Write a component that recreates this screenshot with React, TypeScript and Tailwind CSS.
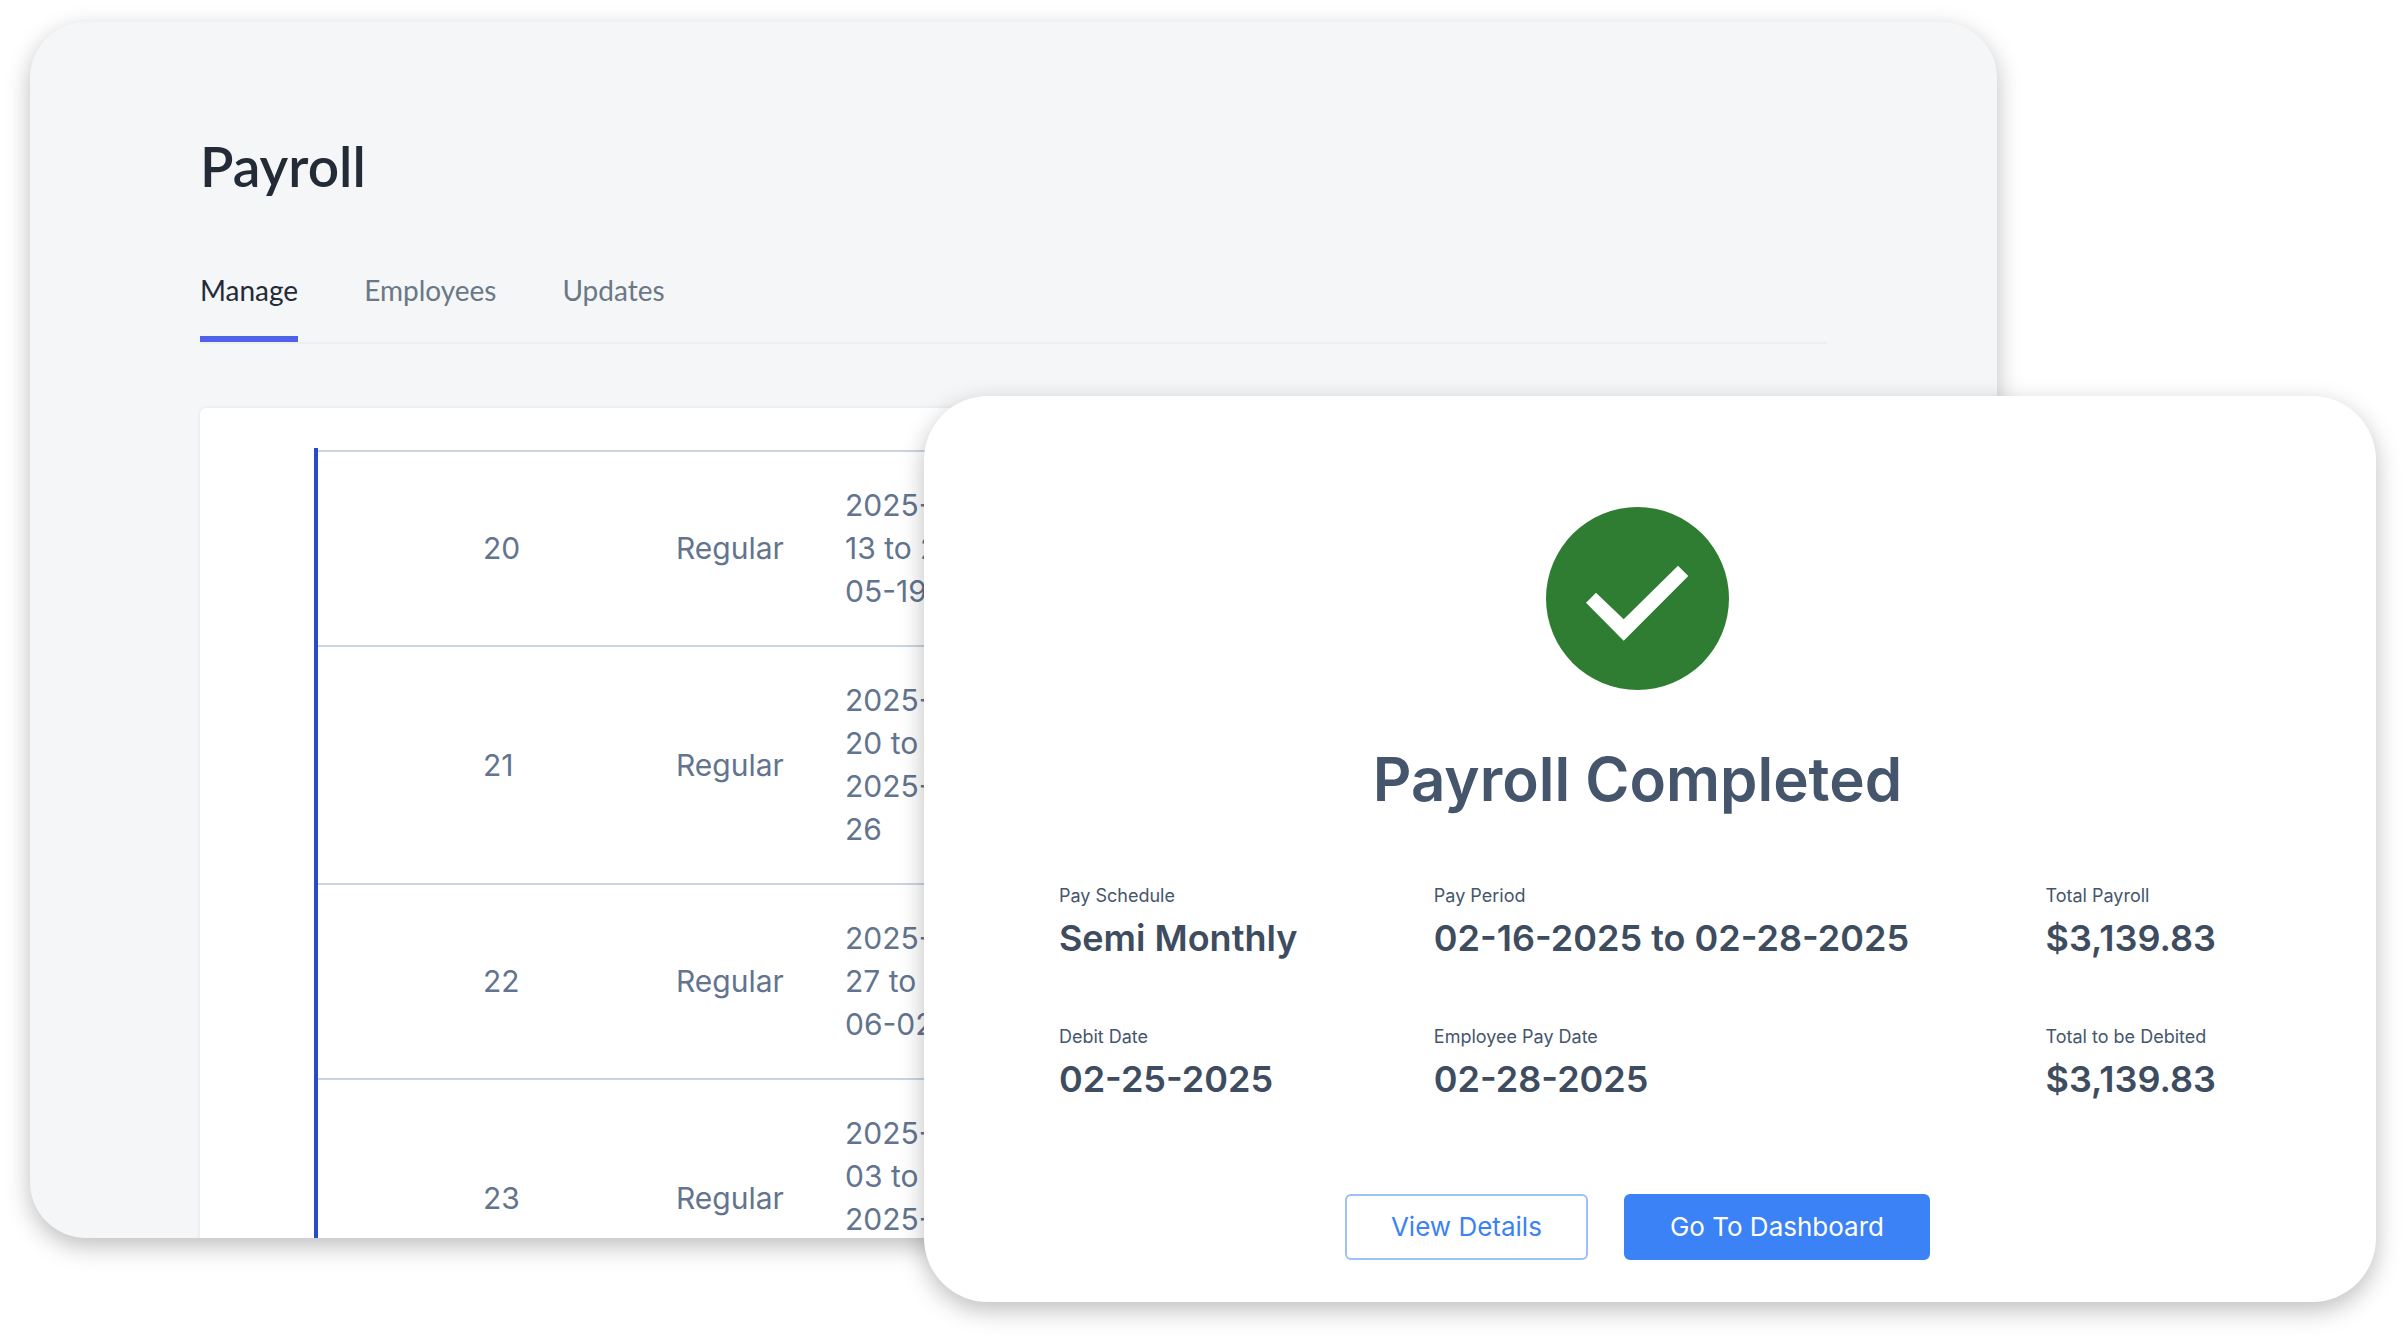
const tabs = ["Manage", "Employees", "Updates"];

const rows = [
  { no: "20", type: "Regular", period: "2025-05-\n13 to 2025-\n05-19" },
  { no: "21", type: "Regular", period: "2025-05-\n20 to\n2025-05-\n26" },
  { no: "22", type: "Regular", period: "2025-05-\n27 to 2025-\n06-02" },
  { no: "23", type: "Regular", period: "2025-06-\n03 to\n2025-06-\n09" },
];

const details = [
  { label: "Pay Schedule", value: "Semi Monthly" },
  { label: "Pay Period", value: "02-16-2025 to 02-28-2025" },
  { label: "Total Payroll", value: "$3,139.83" },
  { label: "Debit Date", value: "02-25-2025" },
  { label: "Employee Pay Date", value: "02-28-2025" },
  { label: "Total to be Debited", value: "$3,139.83" },
];

function CheckBadge() {
  return (
    <svg viewBox="0 0 183 183" className="size-[183px]" aria-hidden="true">
      <circle cx="91.5" cy="91.5" r="91.5" fill="#2f7d32" />
      <path d="M40 95.7 50 85.7 77.7 112.3 132 58.7 142.3 69 77.7 133.7Z" fill="#fff" />
    </svg>
  );
}

function PayrollPanel() {
  return (
    <main className="mr-[17%] ml-[30px] h-[calc(100vh-124px)] overflow-hidden rounded-[56px] bg-[#f4f6f8] px-[170px] pt-[110px] shadow-[0_8px_24px_rgba(0,0,0,0.26)]">
      <h1 className="font-['Lato',sans-serif] text-[55px] leading-[68px] font-semibold text-[#232b36]">
        Payroll
      </h1>
      <nav className="mt-[70px] flex gap-[66px] border-b-2 border-[#eceef1] font-['Lato',sans-serif] text-[28px] leading-[40px]">
        {tabs.map((tab, i) => (
          <a
            key={tab}
            href="#"
            aria-current={i === 0 ? "page" : undefined}
            className={
              i === 0
                ? "border-b-6 border-[#4f63ea] pb-[26px] text-[#232b36]"
                : "border-b-6 border-transparent pb-[26px] text-[#6b7885]"
            }
          >
            {tab}
          </a>
        ))}
      </nav>
      <section className="mt-16 rounded-md bg-white pt-10 pl-[114px] shadow-[0_0_4px_rgba(0,0,0,0.08)]">
        <div className="border-l-4 border-[#264bcb] pt-0.5">
          <table className="w-full table-fixed text-[30px] leading-[43px] text-slate-500">
            <tbody>
              {rows.map((row) => (
                <tr key={row.no} className="border-t-2 border-[#cbd5dd]">
                  <td className="w-[358px] py-8 pl-[165px]">{row.no}</td>
                  <td className="w-[169px] py-8">{row.type}</td>
                  <td className="py-8 whitespace-pre-line">{row.period}</td>
                </tr>
              ))}
            </tbody>
          </table>
        </div>
      </section>
    </main>
  );
}

function CompletedDialog() {
  return (
    <section
      role="dialog"
      aria-labelledby="completed-title"
      className="absolute top-[396px] right-[30px] left-[38.4%] flex flex-col items-center rounded-[64px] bg-white pt-[111px] pr-[160px] pb-[42px] pl-[135px] text-slate-600 shadow-[0_8px_24px_rgba(0,0,0,0.26)]"
    >
      <CheckBadge />
      <h2 id="completed-title" className="mt-[53px] text-[60px] leading-[72px] font-semibold">
        Payroll Completed
      </h2>
      <dl className="mt-[69px] grid w-full grid-cols-[auto_auto_auto] justify-between gap-y-[63px]">
        {details.map((item) => (
          <div key={item.label}>
            <dt className="text-[18px] leading-[24px]">{item.label}</dt>
            <dd className="mt-1.5 text-[36px] leading-[48px] font-semibold text-[#3e4c60]">{item.value}</dd>
          </div>
        ))}
      </dl>
      <div className="mt-[91px] flex gap-9 text-[26px] leading-[38px]">
        <button type="button" className="rounded-md border-2 border-[#9cc0fa] px-11 py-3 text-[#3b82f6]">
          View Details
        </button>
        <button type="button" className="rounded-md border-2 border-[#3b82f6] bg-[#3b82f6] px-11 py-3 text-white">
          Go To Dashboard
        </button>
      </div>
    </section>
  );
}

export default function App() {
  return (
    <div className="relative min-h-screen overflow-hidden bg-white pt-[22px] font-['Inter',sans-serif]">
      <PayrollPanel />
      <CompletedDialog />
    </div>
  );
}
